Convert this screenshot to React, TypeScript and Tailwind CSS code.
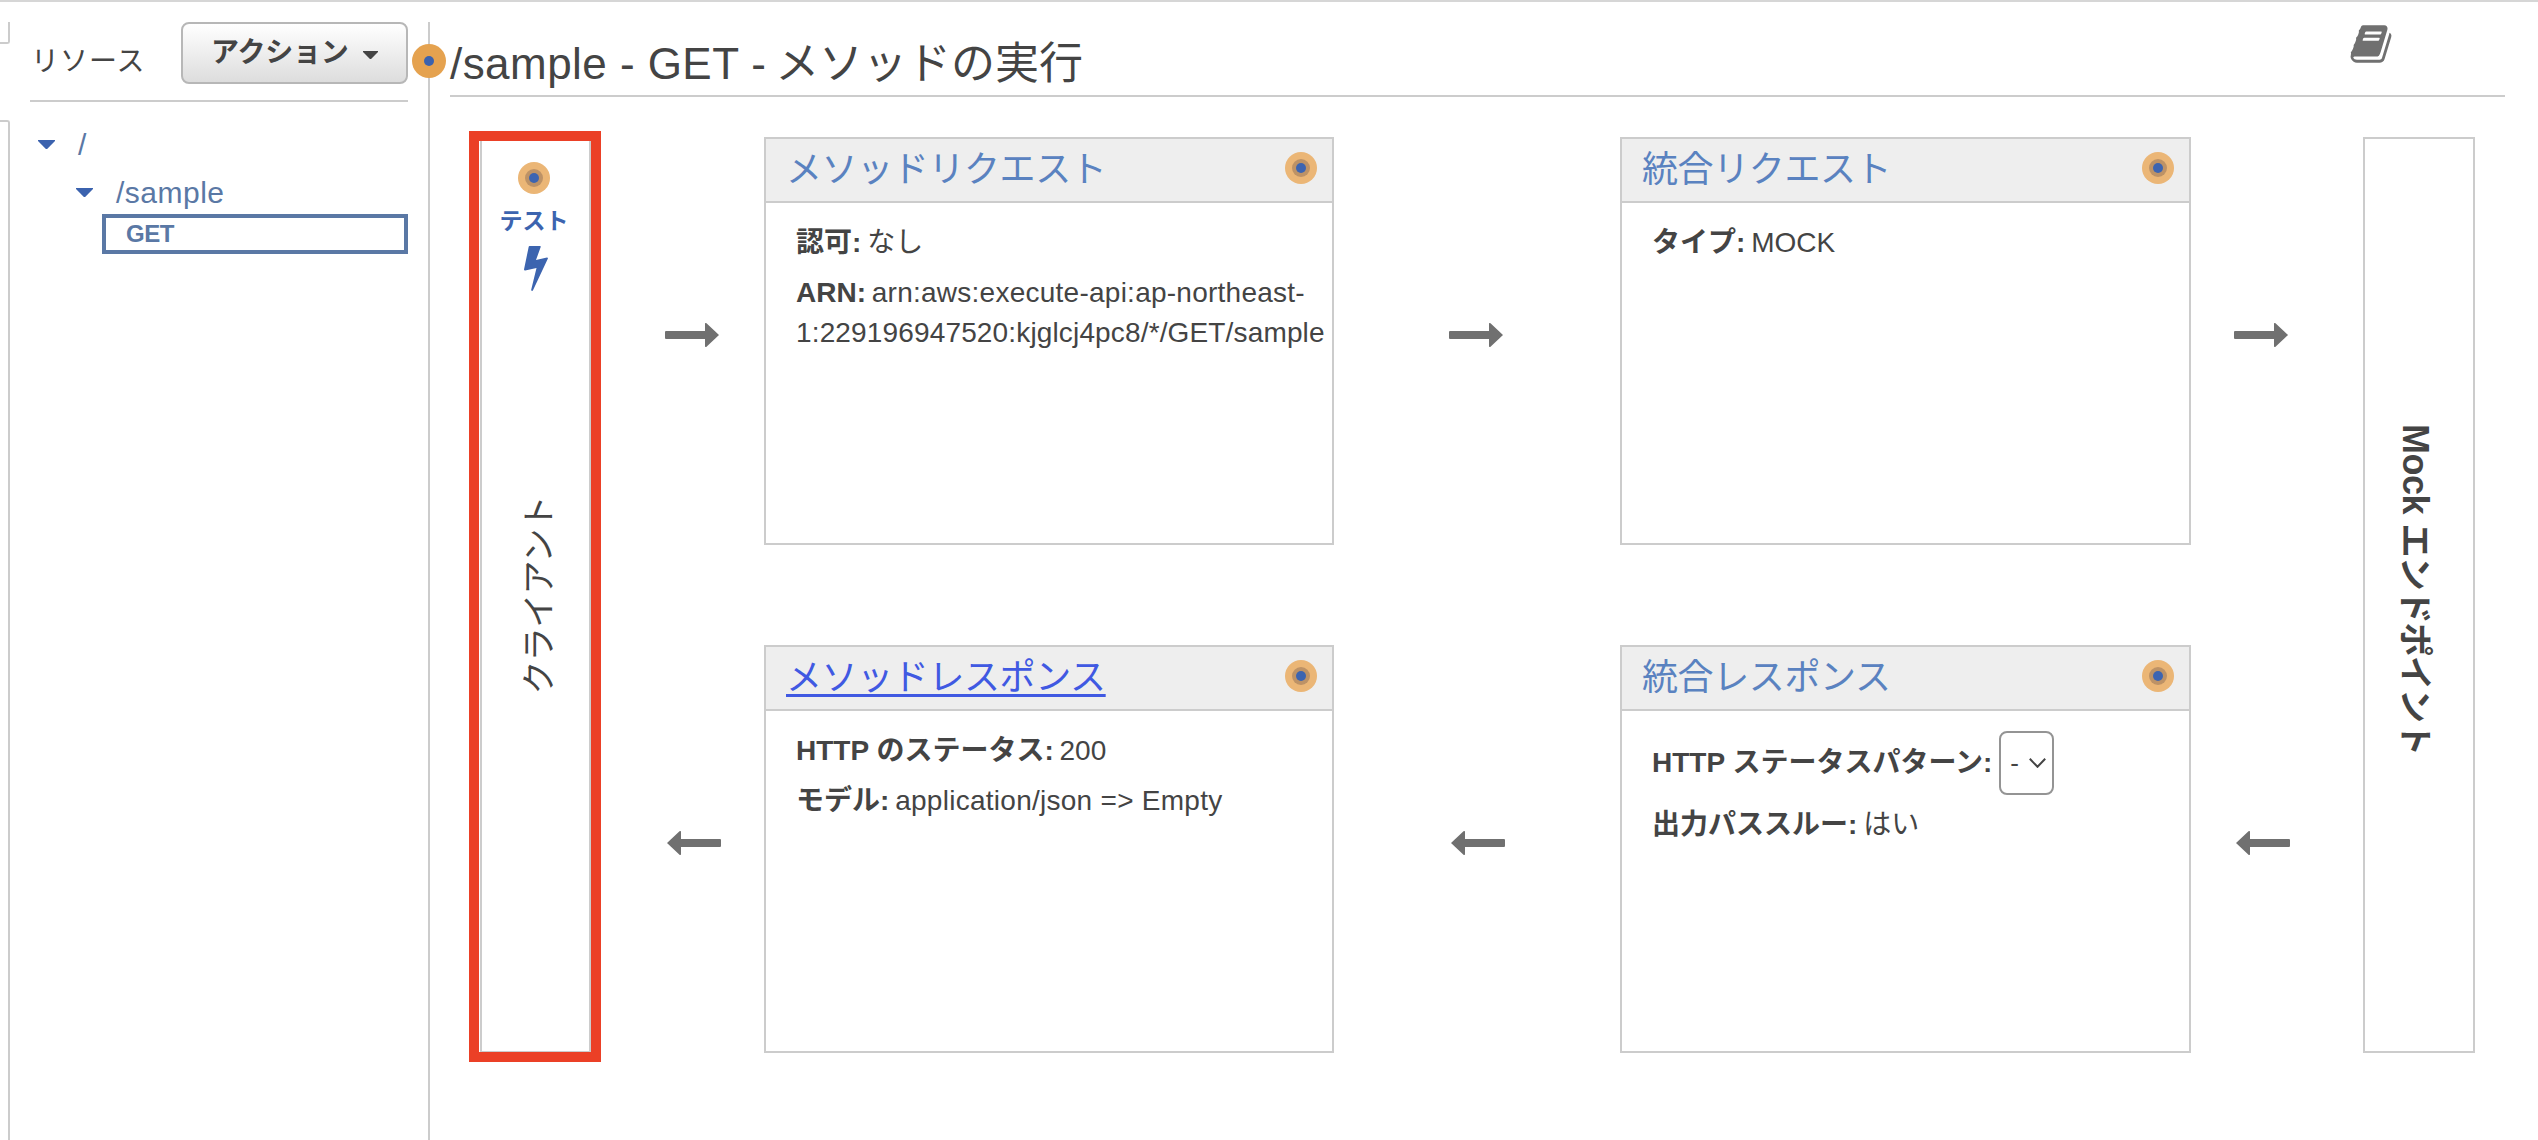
import type { ReactNode } from 'react';

function Caret({ className }: { className: string }) {
  return (
    <svg viewBox="0 0 16 9" preserveAspectRatio="none" className={className} fill="currentColor">
      <path d="M0 0h16v1L8.600 9H7.400L0 1z" />
    </svg>
  );
}

function StatusDot() {
  return (
    <svg viewBox="0 0 32 32" className="size-8 shrink-0">
      <circle cx="16" cy="16" r="16" fill="#EBB676" />
      <circle cx="16" cy="16" r="9" fill="#BD9266" />
      <circle cx="16" cy="16" r="5" fill="#3C64B1" />
    </svg>
  );
}

function ArrowRight() {
  return (
    <svg viewBox="0 0 54 24" className="block h-6 w-[54px] text-[#707070]" fill="currentColor">
      <path d="M1 8h39V1q0-1.500 1.500-.8L54 12 41.500 23.800Q40 24.500 40 23v-7H1q-1 0-1-1V9q0-1 1-1z" />
    </svg>
  );
}

function ArrowLeft() {
  return (
    <svg viewBox="0 0 54 24" className="block h-6 w-[54px] text-[#707070]" fill="currentColor">
      <path d="M53 8H14V1q0-1.500-1.500-.8L0 12l12.500 11.800Q14 24.500 14 23v-7h39q1 0 1-1V9q0-1-1-1z" />
    </svg>
  );
}

function ArrowColumn({ className }: { className: string }) {
  return (
    <div className={`shrink-0 pt-[192px] ${className}`}>
      <ArrowRight />
      <div className="ml-0.5 mt-[484px]">
        <ArrowLeft />
      </div>
    </div>
  );
}

function Card({ title, active, children }: { title: string; active?: boolean; children: ReactNode }) {
  return (
    <section className="flex h-[408px] flex-col border-2 border-[#CCCCCC] bg-white">
      <header className="flex h-16 shrink-0 items-center justify-between border-b-2 border-[#CCCCCC] bg-[#EEEEEE] pl-5 pr-[15px]">
        <a
          className={
            active
              ? 'text-[36px] leading-[40px] tracking-[-0.4px] text-[#4059E2] underline decoration-[3px] underline-offset-[4px] [text-decoration-skip-ink:none]'
              : 'text-[36px] leading-[40px] tracking-[-0.4px] text-[#5A82C0]'
          }
        >
          {title}
        </a>
        <div className="mb-1">
          <StatusDot />
        </div>
      </header>
      <div className="flex flex-col gap-2.5 pl-[30px] pt-5 text-[28px] leading-[40px]">{children}</div>
    </section>
  );
}

function Field({ label, children }: { label: string; children: ReactNode }) {
  return (
    <p className="whitespace-nowrap">
      <b className="mr-[-2px]">{label}:</b> {children}
    </p>
  );
}

export default function App() {
  return (
    <div className="flex h-[1140px] w-full flex-col overflow-hidden border-t-2 border-[#D6D6D6] bg-white font-['Liberation_Sans','Noto_Sans_CJK_JP',sans-serif] text-[#444444]">
      <div className="flex min-h-0 flex-1 pt-5">
        <div className="flex w-2.5 shrink-0 flex-col">
          <div className="h-[22px] rounded-br-[3px] border-b-2 border-r-2 border-[#CCCCCC]" />
          <div className="mt-[76px] flex-1 rounded-tr-[3px] border-r-2 border-t-2 border-[#CCCCCC]" />
        </div>

        <aside className="relative w-[420px] shrink-0 border-r-2 border-[#CCCCCC] pl-5 pr-5">
          <div className="flex h-20 items-start justify-between border-b-2 border-[#CCCCCC]">
            <span className="mt-5 pl-px text-[28px] leading-[40px] tracking-[1px]">リソース</span>
            <button className="flex h-[62px] w-[227px] items-center rounded-lg border-2 border-[#B7B7B7] bg-linear-to-b from-white to-[#DDDDDD] pl-7 text-[28px] font-bold leading-[40px] tracking-[-0.2px]">
              <span>アクション</span>
              <Caret className="ml-[14px] mt-1 h-2 w-[15px]" />
            </button>
          </div>
          <div className="mt-[18px] flex h-12 items-center pl-2 text-[30px] text-[#5A78A5]">
            <Caret className="h-[9px] w-[17px] text-[#3B62AE]" />
            <span className="ml-[23px]">/</span>
          </div>
          <div className="flex h-[46px] items-center pl-[46px] pt-[2px] text-[30px] tracking-[0.5px] text-[#5A78A5]">
            <Caret className="h-[9px] w-[17px] text-[#3B62AE]" />
            <span className="ml-[23px]">/sample</span>
          </div>
          <div className="ml-[72px] flex h-10 items-center border-4 border-[#5A78A5] pl-5 text-[24px] font-bold tracking-[-0.5px] text-[#5A78A5]">
            GET
          </div>
          <svg viewBox="0 0 34 34" className="absolute -right-[18px] top-[22px] size-[34px]">
            <circle cx="17" cy="17" r="17" fill="#E5A24F" />
            <circle cx="17" cy="17" r="5" fill="#3B62AE" />
          </svg>
        </aside>

        <main className="min-w-0 flex-1">
          <div className="ml-5 mr-[33px] flex h-[75px] justify-between border-b-2 border-[#CCCCCC]">
            <h1 className="mt-[17px] whitespace-pre text-[44px] leading-[50px]">
              <span className="mr-[-4px] tracking-[0.45px]">/sample - GET - </span>メソッドの実行
            </h1>
            <svg viewBox="0 0 1792 1792" className="mr-[112px] size-11 text-[#707070]" fill="currentColor">
              <path d="M1703 478q40 57 18 129l-275 906q-19 64-76.500 107.500t-122.500 43.500h-923q-77 0-148.500-53.500t-99.500-131.500q-24-67-2-127 0-4 3-27t4-37q1-8-3-21.500t-3-19.500q2-11 8-21t16.500-23.500 16.500-23.500q23-38 45-91.500t30-91.500q3-10 .5-30t-.5-28q3-11 17-28t17-23q21-36 42-92t25-90q1-9-2.500-32t.5-28q4-13 22-30.500t22-22.500q19-26 42.500-84.500t27.500-96.500q1-8-3-25.500t-2-26.500q2-8 9-18t18-23 17-21q8-12 16.500-30.500t15-35 16-36 19.500-32 26.500-23.500 36-11.500 47.500 5.500l-1 3q38-9 51-9h761q74 0 114 56t18 130l-274 906q-36 119-71.500 153.500t-128.500 34.500h-869q-27 0-38 15-11 16-1 43 24 70 144 70h923q29 0 56-15.500t35-41.500l300-987q7-22 5-57 38 15 59 43zm-1064 2q-4 13 2 22.500t20 9.500h608q13 0 25.500-9.500t16.500-22.500l21-64q4-13-2-22.500t-20-9.500h-608q-13 0-25.500 9.500t-16.500 22.500zm-83 256q-4 13 2 22.500t20 9.500h608q13 0 25.500-9.500t16.500-22.500l21-64q4-13-2-22.500t-20-9.500h-608q-13 0-25.500 9.500t-16.500 22.500z" />
            </svg>
          </div>

          <div className="ml-[39px] mt-[34px] flex h-[931px] items-start">
            <div className="h-[931px] w-[132px] shrink-0 border-10 border-[#EB4026] pl-px">
              <div className="flex h-full flex-col items-center border-x-2 border-b border-[#CCCCCC] pr-[3px] pt-[21px]">
                <StatusDot />
                <span className="mt-[11px] text-[23px] font-bold leading-[32px] text-[#3C64AF]">テスト</span>
                <svg viewBox="0 0 24 45" className="ml-[3px] mt-[9px] h-[45px] w-6 text-[#3C64AF]" fill="currentColor">
                  <path d="M5.500 0H16q1 0 .7 1L12 14l11-2.500q1.300 0 .8 1.200L9 44.200q-.6 1-1.300.6-.7-.3-.5-1L12.500 22 1.200 24.600Q0 24.700 0 23.500L4.700.8Q4.900 0 5.500 0z" />
                </svg>
                <span className="ml-[9px] mt-[205px] rotate-180 text-[34px] leading-[40px] tracking-[-0.7px] [text-orientation:sideways] [writing-mode:vertical-rl]">
                  クライアント
                </span>
              </div>
            </div>

            <ArrowColumn className="w-[163px] pl-16" />

            <div className="mt-1.5 flex w-[570px] shrink-0 flex-col gap-[100px]">
              <Card title="メソッドリクエスト">
                <Field label="認可">なし</Field>
                <Field label="ARN">
                  <span className="tracking-[0.25px]">arn:aws:execute-api:ap-northeast-</span>
                  <br />
                  <span className="tracking-[0.15px]">1:229196947520:kjglcj4pc8/*/GET/sample</span>
                </Field>
              </Card>
              <Card title="メソッドレスポンス" active>
                <Field label="HTTP のステータス">200</Field>
                <Field label="モデル">
                  <span className="tracking-[0.27px]">application/json =&gt; Empty</span>
                </Field>
              </Card>
            </div>

            <ArrowColumn className="w-[286px] pl-[115px]" />

            <div className="mt-1.5 flex w-[571px] shrink-0 flex-col gap-[100px]">
              <Card title="統合リクエスト">
                <Field label="タイプ">MOCK</Field>
              </Card>
              <Card title="統合レスポンス">
                <div className="flex h-16 items-center">
                  <b>HTTP ステータスパターン:</b>
                  <div className="ml-[7px] flex h-16 w-[55px] items-center rounded-lg border-2 border-[#949494] pl-[9px]">
                    <span className="text-[26px]">-</span>
                    <svg viewBox="0 0 17 10" className="ml-[10px] h-2.5 w-[17px]" fill="none" stroke="#444444" strokeWidth="2">
                      <path d="M.8.8 8.500 8.800 16.200.8" />
                    </svg>
                  </div>
                </div>
                <Field label="出力パススルー">はい</Field>
              </Card>
            </div>

            <ArrowColumn className="w-[172px] pl-[43px]" />

            <div className="mt-1.5 flex h-[916px] w-28 shrink-0 justify-center border-2 border-[#CCCCCC] pr-2 pt-[285px]">
              <span className="text-[36px] font-bold leading-[40px] [text-orientation:sideways] [writing-mode:vertical-rl]">
                <span className="tracking-[-0.5px]">Mock </span>
                <span className="text-[34px] tracking-[-0.9px]">エンドポイント</span>
              </span>
            </div>
          </div>
        </main>
      </div>
    </div>
  );
}
